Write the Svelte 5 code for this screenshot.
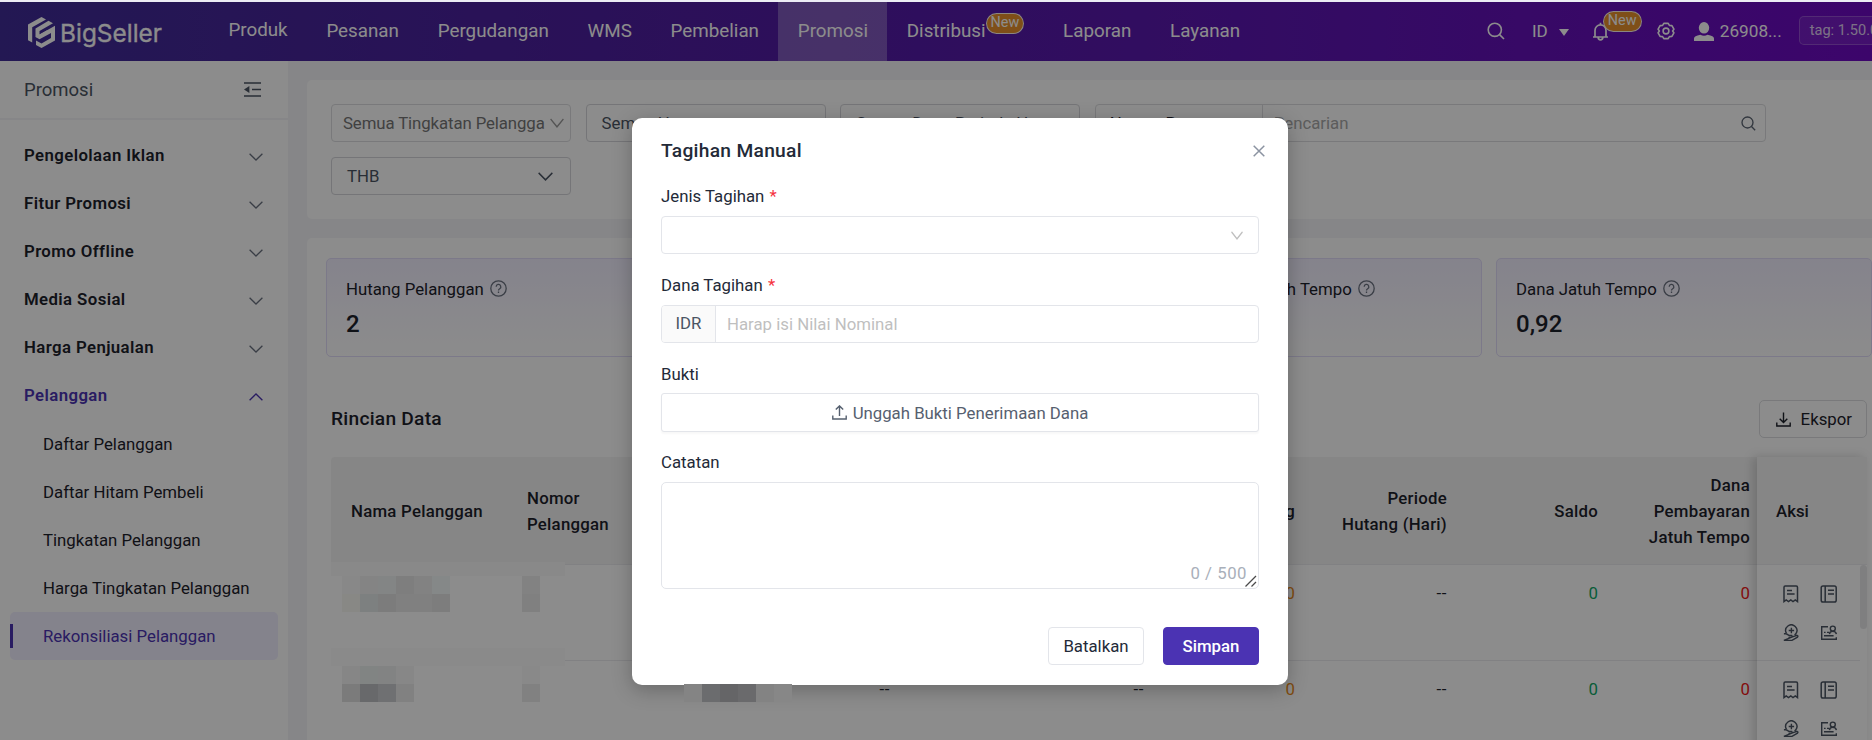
<script lang="ts">
  type NavItem = { label: string; badge?: string; active?: boolean };

  const nav: NavItem[] = [
    { label: 'Produk' },
    { label: 'Pesanan' },
    { label: 'Pergudangan' },
    { label: 'WMS' },
    { label: 'Pembelian' },
    { label: 'Promosi', active: true },
    { label: 'Distribusi', badge: 'New' },
    { label: 'Laporan' },
    { label: 'Layanan' },
  ];

  const groups = ['Pengelolaan Iklan', 'Fitur Promosi', 'Promo Offline', 'Media Sosial', 'Harga Penjualan', 'Pelanggan'];
  const openGroup = 'Pelanggan';
  const children = [
    'Daftar Pelanggan',
    'Daftar Hitam Pembeli',
    'Tingkatan Pelanggan',
    'Harga Tingkatan Pelanggan',
    'Rekonsiliasi Pelanggan',
  ];
  let current = $state('Rekonsiliasi Pelanggan');

  const stats = [
    { label: 'Hutang Pelanggan', value: '2' },
    { label: 'Dana Hutang', value: '0,92' },
    { label: 'Pesanan Hutang Jatuh Tempo', value: '1' },
    { label: 'Dana Jatuh Tempo', value: '0,92' },
  ];

  const columns = [
    'Nama Pelanggan',
    'Nomor Pelanggan',
    'Tingkatan',
    'Batas Hutang',
    'Hutang',
    'Periode Hutang (Hari)',
    'Saldo',
    'Dana Pembayaran Jatuh Tempo',
  ];
  const rows = [
    ['', '', '--', '--', '0', '--', '0', '0'],
    ['', '', '--', '--', '0', '--', '0', '0'],
  ];
  const tones = ['', '', 'dash', 'dash', 'orange', 'dash', 'green', 'red'];

  // Masked customer data, one colour per tile
  const mosaics = [
    { x: 342, y: 576, cols: 6, tiles: ['#888888', '#848484', '#838585', '#7e7e7e', '#828282', '#858888', '#888885', '#7d8080', '#7c7c7c', '#808080', '#808080', '#7d7d7d'] },
    { x: 522, y: 576, cols: 1, tiles: ['#828282', '#808080'] },
    { x: 342, y: 666, cols: 4, tiles: ['#868686', '#818483', '#828383', '#878787', '#7b7b7b', '#68696b', '#6f7072', '#818181'] },
    { x: 522, y: 666, cols: 1, tiles: ['#898989', '#818181'] },
    { x: 684, y: 684, cols: 6, tiles: ['#848484', '#6b6c6e', '#656567', '#6a6a6c', '#838383', '#878787'] },
  ];

  let note = $state('');
</script>

{#snippet search(size: number)}
  <svg width={size} height={size} viewBox="0 0 18 18" fill="none" stroke="currentColor" stroke-width="1.6">
    <circle cx="7.8" cy="7.8" r="6.6" /><path d="M12.6 12.6 17 17" />
  </svg>
{/snippet}

{#snippet chevron(w: number, h: number)}
  <svg class="chev" width={w} height={h} viewBox="0 0 14 8" preserveAspectRatio="none" fill="none" stroke="currentColor" stroke-width="1.3">
    <path d="M.6.8 7 7 13.4.8" />
  </svg>
{/snippet}

{#snippet actions()}
  <svg width="16" height="18" viewBox="0 0 16 18" fill="none" stroke="currentColor" stroke-width="1.5">
    <path d="M1 16.6V2.2Q1 1 2.2 1h11.1q1.2 0 1.2 1.2v14.4l-2.2-1.6-2.3 1.6-2.2-1.6-2.3 1.6-2.3-1.6zM4 5.6h5M4 9h7.6" />
  </svg>
  <svg width="18" height="18" viewBox="0 0 18 18" fill="none" stroke="currentColor" stroke-width="1.5">
    <rect x="1.2" y="1" width="15" height="16" rx="1.8" /><path d="M5.2 1v16M8 5.2h6M8 9h6" />
  </svg>
  <svg width="16" height="18" viewBox="0 0 16 18" fill="none" stroke="currentColor" stroke-width="1.4">
    <path d="M3.4 9.2a5.6 5.6 0 1 1 9.4.6L11.6 11M8.4 3.8v5.4M5.7 6.5h5.4M.9 9.8h2.4l3 1.7h2.5q1 1.6-.6 1.9H5.4M9.4 12.8l4.6-1.5q1.5.5.5 1.8L9 16.4H.9z" />
  </svg>
  <svg width="18" height="18" viewBox="0 0 18 18" fill="none" stroke="currentColor" stroke-width="1.4">
    <path d="M8 2.8H1.7v12.4h14.6v-2M4 8.4h1.6M7 8.4h2.4M4 11.8h9.6" /><circle cx="12.8" cy="4.6" r="2.5" /><path d="M9.4 10.2q.4-3 3.4-3t3.6 3" />
  </svg>
{/snippet}

<div class="page">
  <header class="topbar">
    <div class="logo">
      <svg width="27" height="31" viewBox="0 0 27 31" fill="currentColor">
        <path d="M13.5 0 18 2.4 4.200 10.200V25.600L0 23.200V7.600z" />
        <path d="M20.500 3.800 25 6.300 11.500 14v3.400L27 8.800v14.600L13.500 31 8 27.900v-4.400l5.500 3 9.500-5.400v-5.200l-11.500 6.400-4-2.300v-8.600z" />
        <path d="M7.600 19.800 19.600 13v2.600l-9.400 5.400z" />
      </svg>
      <svg class="wordmark" width="104" height="32" viewBox="0 0 104 32">
        <text x="0" y="24.5" textLength="102" lengthAdjust="spacingAndGlyphs">BigSeller</text>
      </svg>
    </div>
    <nav>
      {#each nav as item}
        <a href="#top" class:active={item.active}>{item.label}{#if item.badge}<em class="badge">{item.badge}</em>{/if}</a>
      {/each}
    </nav>
    <div class="tools">
      {@render search(18)}
      <span class="lang">ID <i></i></span>
      <span class="bell">
        <svg width="17" height="19" viewBox="0 0 17 19" fill="none" stroke="currentColor" stroke-width="1.7">
          <path d="M1 15h15M3 15V8.4a5.5 5.5 0 0 1 11 0V15M8.5 3V.8M6.2 15.6a2.3 2.3 0 0 0 4.6 0" />
        </svg>
        <em class="badge">New</em>
      </span>
      <svg class="gear" width="18" height="18" viewBox="0 0 18 18" fill="none" stroke="currentColor" stroke-width="1.6">
        <path d="M6.8 1.4h4.4l1.2 2 2.5.2 2 3.6L15.6 9l1.3 1.8-2 3.6-2.5.2-1.2 2H6.8l-1.2-2-2.5-.2-2-3.6L2.4 9 1.1 7.2l2-3.6 2.5-.2z" stroke-linejoin="round" /><circle cx="9" cy="9" r="2.9" />
      </svg>
      <span class="user">
        <svg width="20" height="19" viewBox="0 0 20 19" fill="currentColor">
          <ellipse cx="10" cy="5.8" rx="5.2" ry="5.8" /><path d="M0 19v-2.4q0-2.6 6.4-3.8 3.6 1.8 7.2 0Q20 14 20 16.6V19z" />
        </svg>
        26908...
      </span>
      <span class="tag">tag: 1.50.0</span>
    </div>
  </header>

  <div class="body">
    <aside>
      <div class="side-head">
        <span>Promosi</span>
        <svg width="17" height="15" viewBox="0 0 17 15" fill="none" stroke="currentColor" stroke-width="1.7">
          <path d="M0 1h17M8 7.5h9M0 14h17" /><path d="M0 7.5 5.4 4v7z" fill="currentColor" stroke="none" />
        </svg>
      </div>
      <ul>
        {#each groups as g}
          <li class="group" class:open={g === openGroup}>{g}{@render chevron(14, 8)}</li>
        {/each}
        {#each children as c}
          <li class="child" class:current={c === current}>
            <button onclick={() => (current = c)}>{c}</button>
          </li>
        {/each}
      </ul>
    </aside>

    <main>
      <section class="panel filters">
        <div class="select tight muted"><span>Semua Tingkatan Pelangga</span>{@render chevron(14, 10)}</div>
        <div class="select"><span>Semua Hutang</span></div>
        <div class="select"><span>Semua Dana Periode Hu</span></div>
        <div class="search-box">
          <span class="by">Nomor Pesanan</span>
          <span class="query">Pencarian</span>
          {@render search(15)}
        </div>
        <div class="select"><span>THB</span>{@render chevron(15, 9)}</div>
      </section>

      <section class="panel data">
        <div class="stats">
          {#each stats as s}
            <div class="stat">
              <div class="stat-label">
                {s.label}
                <svg width="17" height="17" viewBox="0 0 17 17" fill="none" stroke="currentColor" stroke-width="1.3">
                  <circle cx="8.5" cy="8.5" r="7.7" /><path d="M6.2 6.8a2.3 2.3 0 1 1 3.5 1.9q-1.2.7-1.2 1.8M8.5 11.6v1.4" />
                </svg>
              </div>
              <div class="stat-value">{s.value}</div>
            </div>
          {/each}
        </div>

        <div class="data-head">
          <h2>Rincian Data</h2>
          <button class="export">
            <svg width="15" height="15" viewBox="0 0 15 15" fill="none" stroke="currentColor" stroke-width="1.4">
              <path d="M7.5.5v10M3.7 6.8l3.8 3.8 3.8-3.8M.8 10.5V14h13.4v-3.5" />
            </svg>
            Ekspor
          </button>
        </div>

        <div class="table">
          <div class="scroll">
            <div class="tr th">
              {#each columns as c}<div class="td"><span>{c}</span></div>{/each}
            </div>
            {#each rows as r}
              <div class="tr">
                {#each r as cell, i}<div class="td {tones[i]}">{cell}</div>{/each}
              </div>
            {/each}
          </div>
          <div class="fixed">
            <div class="fh">Aksi</div>
            {#each rows as _}
              <div class="acts">{@render actions()}</div>
            {/each}
            <i class="thumb"></i>
          </div>
        </div>
      </section>
    </main>
  </div>

  <div class="mask">
    <div class="modal" role="dialog" aria-label="Tagihan Manual">
      <div class="modal-head">
        <h3>Tagihan Manual</h3>
        <svg width="12" height="12" viewBox="0 0 12 12" fill="none" stroke="currentColor" stroke-width="1.5">
          <path d="m.7.7 10.6 10.6M11.3.7.7 11.3" />
        </svg>
      </div>

      <div class="label">Jenis Tagihan <b>*</b></div>
      <div class="field pick">{@render chevron(12, 9)}</div>

      <div class="label">Dana Tagihan <b>*</b></div>
      <div class="field amount"><span class="addon">IDR</span><input placeholder="Harap isi Nilai Nominal" /></div>

      <div class="label short">Bukti</div>
      <button class="field upload">
        <svg width="15" height="15" viewBox="0 0 15 15" fill="none" stroke="currentColor" stroke-width="1.4">
          <path d="M7.5 11V1.2M3.8 4.6 7.5.9l3.7 3.7M.8 10.5V14h13.4v-3.5" />
        </svg>
        Unggah Bukti Penerimaan Dana
      </button>

      <div class="label">Catatan</div>
      <div class="note">
        <textarea bind:value={note} maxlength="500"></textarea>
        <span class="count">{note.length} / 500</span>
        <svg class="grip" width="12" height="12" viewBox="0 0 12 12" stroke="#4a4a4a" stroke-width="1.3">
          <path d="M.5 11.5 11 1M6.5 11.5 11 7" />
        </svg>
      </div>

      <div class="modal-foot">
        <button class="btn">Batalkan</button>
        <button class="btn primary">Simpan</button>
      </div>
    </div>
  </div>

  <i class="band upper"></i>
  <i class="band lower"></i>
  {#each mosaics as m}
    <div class="mosaic" style="left: {m.x}px; top: {m.y}px; grid-template-columns: repeat({m.cols}, 18px);">
      {#each m.tiles as t}<i style="background: {t};"></i>{/each}
    </div>
  {/each}
</div>

<style>
  :global(body) {
    margin: 0;
    overflow: hidden;
  }
  .page, .page :global(*) {
    box-sizing: border-box;
  }
  .page {
    position: relative;
    width: 1872px;
    height: 740px;
    overflow: hidden;
    padding-top: 2px;
    background: #f5f5f8;
    font-family: Roboto, "Liberation Sans", sans-serif;
    font-size: 16.8px;
    line-height: 26px;
    color: #1d212b;
  }
  svg { flex: none; display: block; }
  button { font: inherit; color: inherit; }

  /* Top bar */
  .topbar {
    height: 59px;
    display: flex;
    align-items: stretch;
    background: linear-gradient(90deg, #402c98 0%, #4e1fa0 32%, #5c17b2 66%, #6e0ac4 100%);
    color: #fff;
    white-space: nowrap;
  }
  .logo {
    display: flex;
    align-items: center;
    gap: 5px;
    width: 209px;
    padding: 2px 0 0 28px;
    flex: none;
  }
  .wordmark text {
    font-family: Inter, sans-serif;
    font-size: 24.5px;
    fill: currentColor;
    stroke: currentColor;
    stroke-width: 0.3;
  }
  nav { display: flex; font-size: 18.8px; }
  nav a {
    display: flex;
    align-items: center;
    padding: 0 19.4px 2px;
    color: inherit;
    text-decoration: none;
  }
  nav a:first-child { padding-bottom: 4px; }
  nav a.active { background: rgba(255, 255, 255, 0.27); }
  .badge {
    font-style: normal;
    font-size: 14.4px;
    line-height: 18px;
    padding: 0 4px;
    height: 21px;
    border: 1px solid rgba(255, 255, 255, 0.9);
    border-radius: 11px;
    background: #e8912d;
  }
  nav .badge { margin-top: -14px; }
  .tools {
    display: flex;
    align-items: center;
    margin-left: auto;
    width: 385px;
    padding-bottom: 1px;
    flex: none;
    font-size: 18px;
  }
  .lang { margin-left: 27px; font-size: 17px; display: flex; align-items: center; gap: 11px; }
  .lang i {
    border: 5.5px solid transparent;
    border-top: 7px solid #fff;
    border-bottom: 0;
    margin-top: 3px;
  }
  .bell { position: relative; margin-left: 23px; }
  .bell .badge { position: absolute; left: 11px; top: -11px; }
  .gear { margin-left: 48px; }
  .user { display: flex; align-items: center; gap: 6px; margin-left: 19px; font-size: 17.2px; }
  .tag {
    margin-left: 17px;
    margin-top: -1px;
    height: 29px;
    padding: 0 10px;
    border: 1px solid rgba(255, 255, 255, 0.22);
    border-radius: 5px;
    background: rgba(255, 255, 255, 0.08);
    font-size: 14.6px;
    line-height: 26px;
    color: rgba(255, 255, 255, 0.8);
  }

  /* Side menu */
  .body { display: flex; height: 679px; }
  aside { width: 288px; flex: none; background: #fff; }
  .side-head {
    height: 59px;
    padding: 0 27px 0 24px;
    display: flex;
    align-items: center;
    justify-content: space-between;
    border-bottom: 2px solid #f5f5f7;
    font-size: 18.5px;
    color: #4b5563;
  }
  ul { list-style: none; margin: 0; padding: 12px 10px 0; }
  .group {
    height: 48px;
    padding: 0 15px 2px 14px;
    display: flex;
    align-items: center;
    justify-content: space-between;
    font-weight: 600;
    letter-spacing: 0.4px;
  }
  .group :global(.chev) { color: #6b7280; margin-top: 4px; }
  .group.open, .group.open :global(.chev) { color: #4b33b3; }
  .group.open :global(.chev) { transform: rotate(180deg); }
  .child { height: 48px; border-radius: 5px; position: relative; }
  .child button {
    width: 100%;
    height: 47px;
    padding: 0 0 0 33px;
    border: 0;
    background: none;
    text-align: left;
  }
  .child.current { background: #f1eeff; color: #4b33b3; }
  .child.current::before {
    content: '';
    position: absolute;
    left: 0;
    top: 12px;
    width: 3px;
    height: 24px;
    background: #4b33b3;
  }

  /* Content */
  main { width: 1600px; flex: none; padding: 19px 0 0 19px; }
  .panel { background: #fff; border-radius: 5px 0 0 5px; }
  .filters {
    height: 139px;
    padding: 24px 0 0 24px;
    display: flex;
    flex-wrap: wrap;
    align-content: flex-start;
    gap: 15px 14.6px;
  }
  .select {
    width: 240px;
    height: 38px;
    padding: 0 17px 0 15px;
    display: flex;
    align-items: center;
    justify-content: space-between;
    border: 1px solid #d5d6da;
    border-radius: 4px;
    color: #4b5563;
    white-space: nowrap;
  }
  .select.tight { padding: 0 6px 0 11px; border-color: #dcdde0; letter-spacing: -0.1px; }
  .muted { color: #777; }
  .muted :global(.chev) { color: #9a9a9a; }
  .search-box {
    width: 671px;
    height: 38px;
    margin-right: 90px;
    padding-right: 9px;
    display: flex;
    align-items: center;
    border: 1px solid #dcdde0;
    border-radius: 4px;
    color: #5b6472;
  }
  .by { width: 167px; padding-left: 14px; line-height: 36px; border-right: 1px solid #dcdde0; color: #1d212b; }
  .query { flex: 1; padding-left: 11px; color: #a8a8a8; }

  .data { margin-top: 19px; height: 520px; padding: 20px 0 0 19px; }
  .stats { display: grid; grid-template-columns: repeat(4, 376px); gap: 14px; }
  .stat {
    height: 99px;
    padding: 17px 19px 0;
    border: 1px solid #e2dcfa;
    border-radius: 5px;
    background: linear-gradient(180deg, #f2efff, #fff);
  }
  .stat-label { display: flex; align-items: center; gap: 6px; }
  .stat-label svg { color: #6b7280; margin-top: -2px; }
  .stat-value { margin-top: 9px; font-size: 24px; font-weight: 500; }
  .data-head {
    width: 1541px;
    height: 38px;
    margin-top: 43px;
    display: flex;
    align-items: center;
    justify-content: space-between;
    padding-left: 5px;
  }
  h2 { margin: 0; font-size: 19.2px; font-weight: 500; letter-spacing: 0.25px; }
  .export {
    width: 108px;
    height: 38px;
    padding: 0 14px 0 16px;
    display: flex;
    align-items: center;
    justify-content: space-between;
    border: 1px solid #dcdde0;
    border-radius: 5px;
    background: none;
  }
  .table { display: flex; width: 1536px; margin: 19px 0 0 5px; }
  .scroll { width: 1426px; overflow: hidden; }
  .tr {
    display: grid;
    grid-template-columns: 176px 178px 224px 254px 151px 152px 151px 152px;
    width: 1438px;
    height: 96px;
    border-bottom: 1px solid #ebebee;
  }
  .td { padding: 15px 19px 0; text-align: right; }
  .td:nth-child(-n + 2) { text-align: left; padding-left: 20px; }
  .th { height: 108px; background: #f5f5f5; border-radius: 4px 0 0 0; align-items: center; }
  .th .td { padding-top: 0; font-weight: 500; letter-spacing: 0.25px; }
  .th .td:nth-child(2) { padding-right: 60px; }
  .dash { letter-spacing: 0.6px; }
  .orange { color: #e88a1a; }
  .green { color: #0fa968; }
  .red { color: #f01818; }
  .fixed {
    position: relative;
    width: 110px;
    background: #fff;
    box-shadow: -4px 0 10px rgba(0, 0, 0, 0.17);
  }
  .fh {
    height: 108px;
    padding: 0 19px;
    display: flex;
    align-items: center;
    background: #f5f5f5;
    border-bottom: 1px solid #ebebee;
    font-weight: 500;
  }
  .acts {
    width: 103px;
    height: 96px;
    padding: 20px 22px 0 26px;
    display: grid;
    grid-template-columns: 16px 18px;
    justify-content: space-between;
    align-content: start;
    row-gap: 21px;
    border-bottom: 1px solid #ebebee;
    color: #4b5563;
  }
  .thumb {
    position: absolute;
    right: 0;
    top: 108px;
    width: 7px;
    height: 64px;
    border-radius: 4px;
    background: #e8e8ea;
  }

  /* Dialog */
  .mask {
    position: absolute;
    inset: 0;
    display: flex;
    justify-content: center;
    align-items: flex-start;
    padding: 116px 0 0 48px;
    border-top: 2px solid #ececf4;
    background: rgba(0, 0, 0, 0.45);
    background-clip: padding-box;
  }
  .modal {
    width: 656px;
    height: 567px;
    padding: 0 29px;
    border-radius: 10px;
    background: #fff;
    box-shadow: 0 5px 20px rgba(0, 0, 0, 0.25);
  }
  .modal-head {
    height: 64px;
    padding-top: 1px;
    display: flex;
    align-items: center;
    justify-content: space-between;
    color: #8b93a1;
  }
  .modal-head svg { margin-right: -6px; }
  h3 { margin: 0; font-size: 19.2px; font-weight: 500; letter-spacing: 0.3px; color: #232a38; }
  .label { height: 34px; line-height: 29px; color: #232a38; }
  .label.short { height: 33px; line-height: 28px; }
  .label b { margin-left: 1px; font-weight: 400; color: #f5333f; }
  .field {
    width: 598px;
    height: 38px;
    margin-bottom: 17px;
    display: flex;
    align-items: center;
    border: 1px solid #e3e5ea;
    border-radius: 4px;
    background: #fff;
  }
  .pick { justify-content: flex-end; padding-right: 15px; color: #bfbfbf; }
  .amount { overflow: hidden; }
  .addon {
    width: 54px;
    line-height: 34px;
    height: 36px;
    text-align: center;
    border-right: 1px solid #e3e5ea;
    background: #fafafa;
    color: #4b5563;
  }
  input {
    flex: 1;
    padding: 0 11px;
    border: 0;
    outline: 0;
    font: inherit;
  }
  input::placeholder { color: #bfbfbf; opacity: 1; }
  .upload {
    height: 39px;
    margin-bottom: 16px;
    padding: 0;
    justify-content: center;
    gap: 6px;
    border-radius: 3px;
    box-shadow: 0 2px 2px rgba(0, 0, 0, 0.03);
    color: #56606f;
  }
  .note { position: relative; height: 107px; }
  textarea {
    display: block;
    width: 598px;
    height: 107px;
    border: 1px solid #e3e5ea;
    border-radius: 5px;
    resize: none;
    font: inherit;
  }
  .count { position: absolute; right: 12px; bottom: 3px; color: #a9afba; letter-spacing: 0.5px; }
  .grip { position: absolute; right: 2px; bottom: 2px; }
  .modal-foot { display: flex; justify-content: flex-end; gap: 19px; margin-top: 38px; }
  .btn {
    width: 96px;
    height: 38px;
    padding: 0;
    border: 1px solid #e3e5ea;
    border-radius: 4px;
    background: #fff;
    color: #232a38;
  }
  .primary { border-color: #4b33b3; background: #4b33b3; color: #fff; font-weight: 500; }

  /* Redaction tiles */
  .mosaic { position: absolute; display: grid; grid-auto-rows: 18px; }
  .band { position: absolute; left: 331px; width: 234px; background: #898989; }
  .upper { top: 562px; height: 14px; }
  .lower { top: 648px; height: 18px; background: #8a8a8a; }
</style>
